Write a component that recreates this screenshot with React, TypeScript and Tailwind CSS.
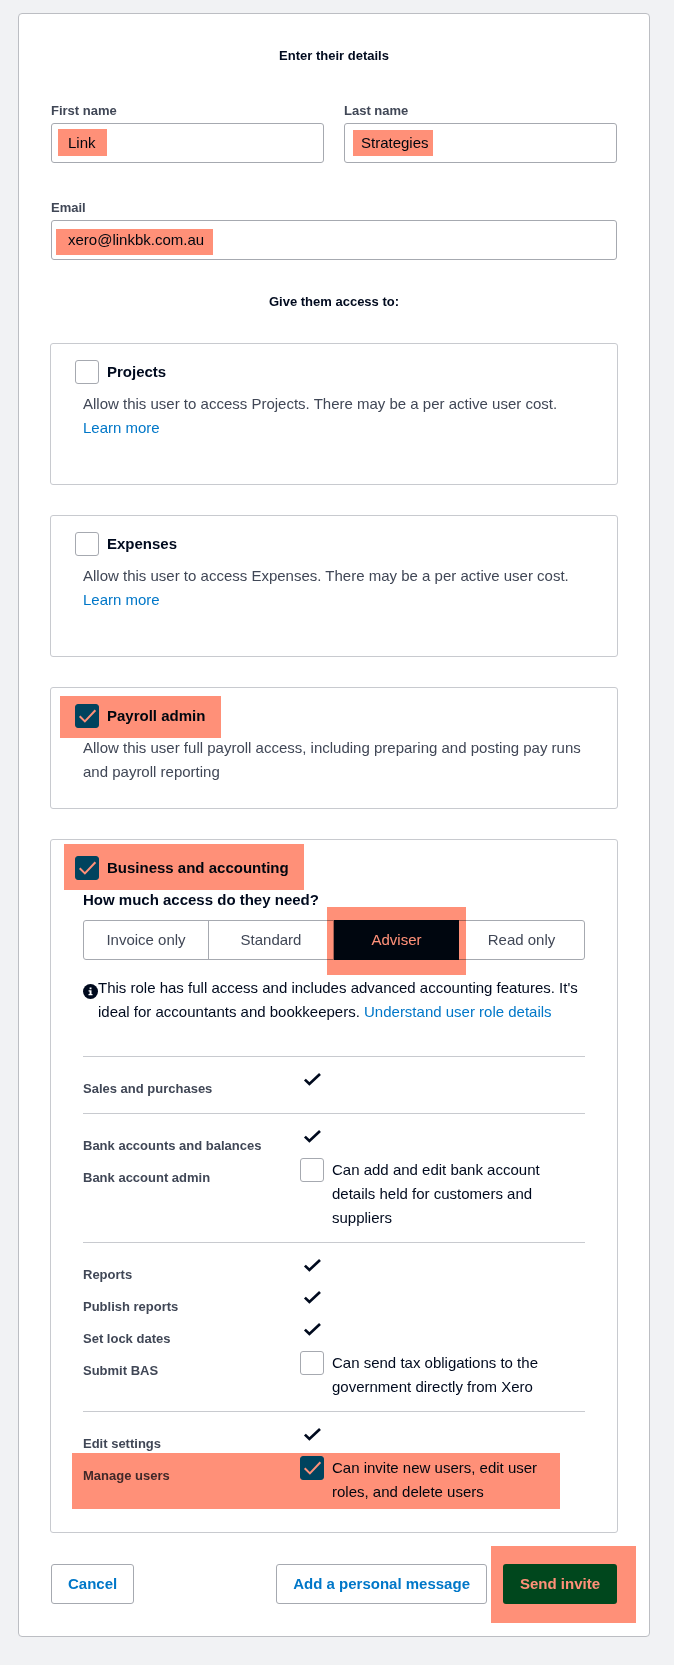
import { useState } from "react";
import type { ReactNode } from "react";

const roles = ["Invoice only", "Standard", "Adviser", "Read only"];

type Permission = {
  name: string;
  option?: string;
  checked?: boolean;
  highlighted?: boolean;
};

const permissionGroups: Permission[][] = [
  [{ name: "Sales and purchases" }],
  [
    { name: "Bank accounts and balances" },
    {
      name: "Bank account admin",
      option: "Can add and edit bank account details held for customers and suppliers",
    },
  ],
  [
    { name: "Reports" },
    { name: "Publish reports" },
    { name: "Set lock dates" },
    {
      name: "Submit BAS",
      option: "Can send tax obligations to the government directly from Xero",
    },
  ],
  [
    { name: "Edit settings" },
    {
      name: "Manage users",
      option: "Can invite new users, edit user roles, and delete users",
      checked: true,
      highlighted: true,
    },
  ],
];

/* Marker-pen overlay that tints whatever lies under it. */
function Highlight({ className }: { className: string }) {
  return (
    <span
      aria-hidden="true"
      className={`pointer-events-none absolute z-10 bg-[#ff9078] mix-blend-multiply ${className}`}
    />
  );
}

function Checkbox({ id, checked = false }: { id: string; checked?: boolean }) {
  return (
    <span className="grid size-6 shrink-0">
      <input
        id={id}
        type="checkbox"
        defaultChecked={checked}
        className="peer col-start-1 row-start-1 size-6 appearance-none rounded-[3px] border border-[#a6a9b0] bg-white checked:border-[#0077c8] checked:bg-[#0077c8]"
      />
      <svg
        viewBox="0 0 24 24"
        fill="none"
        className="pointer-events-none invisible col-start-1 row-start-1 size-6 peer-checked:visible"
      >
        <path d="M4.7 12.2 9.9 17.4 20.4 6.3" stroke="#fff" strokeWidth="2" />
      </svg>
    </span>
  );
}

function TickIcon() {
  return (
    <svg viewBox="0 0 18 14" fill="none" className="h-[14px] w-[18px]" role="img" aria-label="Included">
      <path d="M1.9 7.6 6.4 12 17 2.1" stroke="#000a1e" strokeWidth="2.7" />
    </svg>
  );
}

function InfoIcon() {
  return (
    <svg viewBox="0 0 15 15" className="mt-2 size-[15px] shrink-0" aria-hidden="true">
      <circle cx="7.5" cy="7.5" r="7.5" fill="#000a1e" />
      <path d="M6.6 3.4h1.9v1.8H6.600zM5.600 6.200h2.900v3.800h1v1.300H5.500V10h1.100V7.500h-1z" fill="#fff" />
    </svg>
  );
}

function Field({
  id,
  label,
  type = "text",
  value,
  highlight,
}: {
  id: string;
  label: string;
  type?: string;
  value: string;
  highlight: string;
}) {
  return (
    <div className="flex flex-col gap-0.5">
      <label htmlFor={id} className="text-[13px] leading-5 font-bold text-[#404756]">
        {label}
      </label>
      <div className="relative">
        <input
          id={id}
          type={type}
          defaultValue={value}
          className="block h-10 w-full rounded-[3px] border border-[#a6a9b0] bg-white px-4 pb-0.5 text-[15px] text-[#000a1e]"
        />
        <Highlight className={highlight} />
      </div>
    </div>
  );
}

function AccessCard({
  id,
  title,
  checked,
  highlight,
  className = "",
  children,
}: {
  id: string;
  title: string;
  checked?: boolean;
  highlight?: string;
  className?: string;
  children: ReactNode;
}) {
  return (
    <section className={`relative rounded-[3px] border border-[#c8cacf] pt-4 ${className}`}>
      <div className="flex items-center gap-2 px-6">
        <Checkbox id={id} checked={checked} />
        <label htmlFor={id} className="text-[15px] leading-6 font-bold text-[#000a1e]">
          {title}
        </label>
      </div>
      {highlight && <Highlight className={highlight} />}
      <div className="mt-2 px-8 text-[15px] leading-6 text-[#404756]">{children}</div>
    </section>
  );
}

function PermissionRow({ permission }: { permission: Permission }) {
  const id = permission.name.toLowerCase().replace(/ /g, "-");
  return (
    <div className="relative grid min-h-8 grid-cols-[217px_1fr]">
      <span className="pt-2 text-[13px] leading-6 font-bold text-[#404756]">{permission.name}</span>
      {permission.option ? (
        <div className="flex gap-2 pr-4">
          <Checkbox id={id} checked={permission.checked} />
          <label htmlFor={id} className="text-[#000a1e]">
            {permission.option}
          </label>
        </div>
      ) : (
        <div className="flex h-5 w-6 items-center justify-center">
          <TickIcon />
        </div>
      )}
      {permission.highlighted && <Highlight className="-top-[3px] right-[25px] -left-[11px] h-14" />}
    </div>
  );
}

export default function App() {
  const [role, setRole] = useState("Adviser");

  return (
    <div className="min-h-screen bg-[#f1f2f4] pt-[13px] pr-6 pb-7 pl-[18px] font-['Liberation_Sans',Arial,sans-serif]">
      <form
        onSubmit={(event) => event.preventDefault()}
        className="rounded-[4px] border border-[#bcbec3] bg-white px-[31px] py-8"
      >
        <h2 className="text-center text-[13px] leading-5 font-bold text-[#000a1e]">Enter their details</h2>

        <div className="mt-[35px] grid grid-cols-2 gap-x-5 gap-y-[35px] px-px">
          <Field id="first-name" label="First name" value="Link" highlight="top-[6px] left-[7px] h-[27px] w-[49px]" />
          <Field id="last-name" label="Last name" value="Strategies" highlight="top-[7px] left-[9px] h-[26px] w-20" />
          <div className="col-span-2">
            <Field
              id="email"
              label="Email"
              type="email"
              value="xero@linkbk.com.au"
              highlight="top-[9px] left-[5px] h-[26px] w-[157px]"
            />
          </div>
        </div>

        <h2 className="mt-8 text-center text-[13px] leading-5 font-bold text-[#000a1e]">Give them access to:</h2>

        <div className="mt-[31px] flex flex-col gap-[30px]">
          <AccessCard id="projects" title="Projects" className="pb-11">
            <p>Allow this user to access Projects. There may be a per active user cost.</p>
            <a href="#projects" className="text-[#0077c8]">
              Learn more
            </a>
          </AccessCard>

          <AccessCard id="expenses" title="Expenses" className="pb-11">
            <p>Allow this user to access Expenses. There may be a per active user cost.</p>
            <a href="#expenses" className="text-[#0077c8]">
              Learn more
            </a>
          </AccessCard>

          <AccessCard
            id="payroll"
            title="Payroll admin"
            checked
            highlight="top-2 left-[9px] h-[42px] w-[161px]"
            className="pb-6"
          >
            <p>Allow this user full payroll access, including preparing and posting pay runs and payroll reporting</p>
          </AccessCard>

          <AccessCard
            id="business"
            title="Business and accounting"
            checked
            highlight="top-1 left-[13px] h-[46px] w-60"
            className="pb-4"
          >
            <h3 className="font-bold text-[#000a1e]">How much access do they need?</h3>
            <div className="mt-2 grid h-10 grid-cols-4 rounded-[3px] border border-[#a6a9b0]">
              {roles.map((name) => (
                <div key={name} className="relative flex border-r border-[#a6a9b0] last:border-r-0">
                  <button
                    type="button"
                    aria-pressed={role === name}
                    onClick={() => setRole(name)}
                    className="flex-1 aria-pressed:-my-px aria-pressed:-mr-px aria-pressed:bg-[#000a1e] aria-pressed:text-white"
                  >
                    {name}
                  </button>
                  {name === "Adviser" && <Highlight className="-top-[14px] -right-2 -left-[7px] h-[68px]" />}
                </div>
              ))}
            </div>

            <div className="mt-4 flex text-[#000a1e]">
              <InfoIcon />
              <p>
                This role has full access and includes advanced accounting features. It's ideal for accountants and
                bookkeepers.{" "}
                <a href="#roles" className="text-[#0077c8]">
                  Understand user role details
                </a>
              </p>
            </div>

            <div className="mt-8">
              {permissionGroups.map((group) => (
                <div key={group[0].name} className="border-t border-[#c8cacf] py-3">
                  {group.map((permission) => (
                    <PermissionRow key={permission.name} permission={permission} />
                  ))}
                </div>
              ))}
            </div>
          </AccessCard>
        </div>

        <div className="mt-[31px] flex gap-4 px-px text-[15px] font-bold">
          <button type="button" className="mr-auto h-10 rounded-[3px] border border-[#a6a9b0] px-4 text-[#0077c8]">
            Cancel
          </button>
          <button type="button" className="h-10 rounded-[3px] border border-[#a6a9b0] px-4 text-[#0077c8]">
            Add a personal message
          </button>
          <div className="relative">
            <button type="submit" className="h-10 rounded-[3px] bg-[#007d3c] px-[17px] text-white">
              Send invite
            </button>
            <Highlight className="-top-[18px] -right-[19px] -left-3 h-[77px]" />
          </div>
        </div>
      </form>
    </div>
  );
}
